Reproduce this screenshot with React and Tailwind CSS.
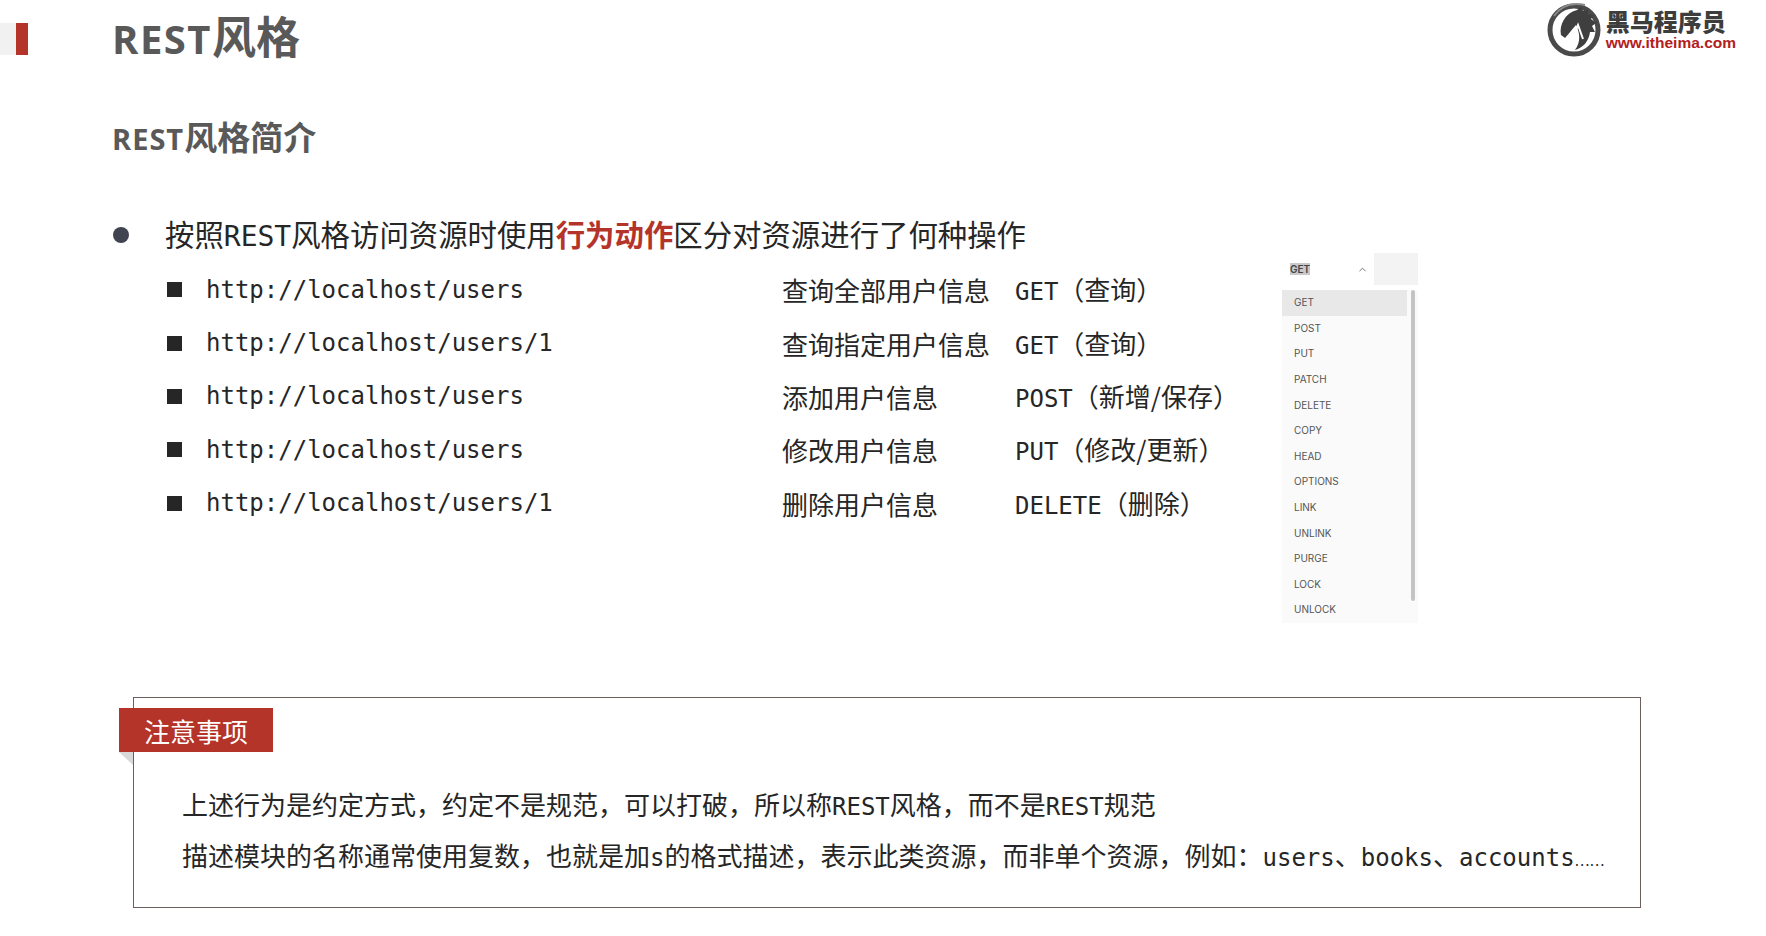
import { ChevronUp } from 'lucide-react';

const rows = [
  { url: 'http://localhost/users', desc: '查询全部用户信息', method: 'GET', note: '（查询）' },
  { url: 'http://localhost/users/1', desc: '查询指定用户信息', method: 'GET', note: '（查询）' },
  { url: 'http://localhost/users', desc: '添加用户信息', method: 'POST', note: '（新增/保存）' },
  { url: 'http://localhost/users', desc: '修改用户信息', method: 'PUT', note: '（修改/更新）' },
  { url: 'http://localhost/users/1', desc: '删除用户信息', method: 'DELETE', note: '（删除）' },
];

const httpMethods = ['GET', 'POST', 'PUT', 'PATCH', 'DELETE', 'COPY', 'HEAD', 'OPTIONS', 'LINK', 'UNLINK', 'PURGE', 'LOCK', 'UNLOCK'];

function Mono({ children, className = '' }) {
  return <span className={`font-['DejaVu_Sans_Mono',monospace] text-[24px] ${className}`}>{children}</span>;
}

function Logo() {
  return (
    <div className="flex items-center gap-[3px]">
      <svg width="58" height="56" viewBox="0 0 58 56">
        <circle cx="29" cy="29" r="24" fill="#fff" stroke="#4a4a4a" strokeWidth="5" />
        <path d="M9 15 C16 5 27 1 40 4" fill="none" stroke="#8a8a8a" strokeWidth="2" />
        <path d="M16 34 C14 24 20 12 32 9 L36 6 L38 10 L43 9 L43 13 L49 14 L46 18 L51 22 L47 25 L50 31 L45 31 C44 40 38 47 30 49 C36 41 35 32 31 24 C27 28 24 33 20 37 Z" fill="#3f3f3f" />
        <path d="M26 40 L33 24 L38 38" fill="none" stroke="#fff" strokeWidth="2" />
      </svg>
      <div className="flex flex-col items-start">
        <span className="font-['Noto_Sans_CJK_SC',sans-serif] text-[24px] font-black leading-[28px] text-[#3d3d3d]">黑马程序员</span>
        <span className="font-['Liberation_Sans',sans-serif] text-[15.5px] font-bold leading-[16px] text-[#b3201c]">www.itheima.com</span>
      </div>
    </div>
  );
}

function MethodDropdown() {
  return (
    <div className="flex w-[136px] flex-col font-['Inter',sans-serif]">
      <div className="flex h-[32px] bg-[#f3f3f3]">
        <div className="flex w-[92px] items-center justify-between bg-white pl-[8px] pr-[6px]">
          <span className="bg-[#c9c9c9] text-[10px] font-semibold leading-[12px] text-[#444]">GET</span>
          <ChevronUp size={11} color="#666" />
        </div>
      </div>
      <div className="mt-[5px] flex h-[333px] bg-[#fafafa]">
        <div className="flex w-[125px] flex-col overflow-hidden">
          {httpMethods.map((m, i) => (
            <div
              key={m}
              className={`flex h-[25.6px] shrink-0 items-center pl-[12px] text-[10px] text-[#555] ${i === 0 ? 'bg-[#e8e8e8]' : ''}`}
            >
              {m}
            </div>
          ))}
        </div>
        <div className="ml-[4px] h-[311px] w-[4px] rounded-full bg-[#c4c4c4]" />
      </div>
    </div>
  );
}

export default function App() {
  return (
    <div className="flex h-[936px] w-full flex-col overflow-hidden bg-white font-['Noto_Sans_CJK_SC',sans-serif] text-[#262626]">
      {/* Header */}
      <div className="flex h-[70px] items-start justify-between pr-[30px]">
        <div className="flex items-start">
          <div className="mt-[23px] flex h-[32px] w-[28px] shrink-0">
            <div className="w-[16px] bg-[#f1f1f1]" />
            <div className="w-[12px] bg-[#b5342a]" />
          </div>
          <h1 className="ml-[84px] mt-[3px] text-[44px] font-bold leading-[64px] text-[#595959]">
            <span className="font-['Open_Sans',sans-serif] text-[40px] tracking-[1.5px]">REST</span>风格
          </h1>
        </div>
        <div className="pt-[1px]">
          <Logo />
        </div>
      </div>

      <h2 className="ml-[112px] mt-[42px] text-[33px] font-bold leading-[48px] text-[#595959]">
        <span className="font-['Open_Sans',sans-serif] text-[29px] tracking-[1px]">REST</span>风格简介
      </h2>

      {/* Bullet */}
      <div className="mt-[50px] flex h-[44px] items-center pl-[113px]">
        <span className="h-[16px] w-[16px] shrink-0 rounded-full bg-[#3f4450]" />
        <p className="ml-[36px] whitespace-nowrap text-[29.4px] leading-[44px]">
          按照<span className="font-['DejaVu_Sans_Mono',monospace] text-[28px]">REST</span>风格访问资源时使用
          <strong className="font-bold text-[#b5342a]">行为动作</strong>区分对资源进行了何种操作
        </p>
      </div>

      {/* Rows and dropdown */}
      <div className="flex items-start">
        <div className="ml-[167px] mt-[6px] flex w-[1115px] flex-col">
          {rows.map((r, i) => (
            <div key={i} className="grid h-[53.4px] grid-cols-[39px_576px_233px_1fr] items-center whitespace-nowrap">
              <span className="h-[15px] w-[15px] bg-[#262626]" />
              <Mono>{r.url}</Mono>
              <span className="text-[26px]">{r.desc}</span>
              <span className="text-[26px]">
                <Mono>{r.method}</Mono>
                {r.note}
              </span>
            </div>
          ))}
        </div>
        <div className="-mt-[4px]">
          <MethodDropdown />
        </div>
      </div>

      {/* Notice box */}
      <div className="relative ml-[133px] mt-[74px] h-[211px] w-[1508px] border border-[#6e5f5f] pl-[48px] pt-[82px]">
        <div className="absolute -left-[15px] top-[10px] flex h-[44px] w-[154px] items-center justify-center bg-[#b5342a] text-[26px] text-white">
          注意事项
        </div>
        <div className="absolute -left-[15px] top-[54px] h-0 w-0 border-l-[14px] border-t-[13px] border-l-transparent border-t-[#d9d9d9]" />
        <p className="whitespace-nowrap text-[26px] leading-[47px]">
          上述行为是约定方式，约定不是规范，可以打破，所以称<Mono>REST</Mono>风格，而不是<Mono>REST</Mono>规范
        </p>
        <p className="whitespace-nowrap text-[26px] leading-[47px]">
          描述模块的名称通常使用复数，也就是加<Mono>s</Mono>的格式描述，表示此类资源，而非单个资源，例如：<Mono>users</Mono>、<Mono>books</Mono>、<Mono>accounts</Mono>
          <span className="text-[14px]">……</span>
        </p>
      </div>
    </div>
  );
}
